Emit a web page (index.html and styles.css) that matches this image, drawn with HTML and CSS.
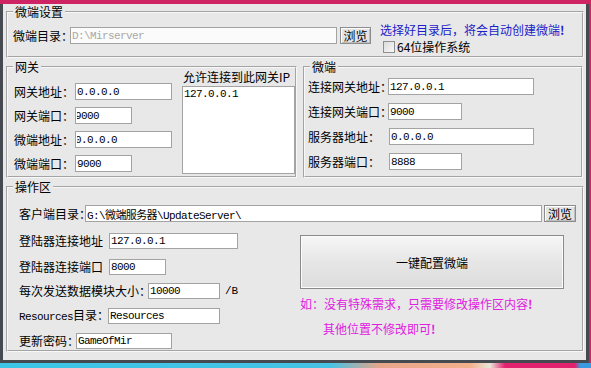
FILE: index.html
```html
<!DOCTYPE html>
<html lang="zh-CN">
<head>
    <meta charset="UTF-8">
    <title>微端配置</title>
    <link rel="stylesheet" href="styles.css">
</head>
<body>
    <div class="window">
        <fieldset class="group g-setup">
            <legend>微端设置</legend>
            <div class="row dir-row">
                <span class="lbl" style="width:57px">微端目录：</span>
                <input class="txt" style="width:267px" value="D:\Mirserver" disabled>
                <button class="btn-small">浏览</button>
            </div>
            <div class="hint-col">
                <div class="hint-blue">选择好目录后，将会自动创建微端<b>!</b></div>
                <label class="check-row"><input type="checkbox" class="chk">64位操作系统</label>
            </div>
        </fieldset>

        <div class="mid">
            <fieldset class="group g-gate">
                <legend>网关</legend>
                <div class="gate-body">
                    <div class="form-col gate-fields">
                        <div class="row"><span class="lbl" style="width:61px">网关地址：</span><input class="txt" style="width:97px" value="0.0.0.0"></div>
                        <div class="row"><span class="lbl" style="width:61px">网关端口：</span><input class="txt clip" style="width:57px" value="9000"></div>
                        <div class="row"><span class="lbl" style="width:61px">微端地址：</span><input class="txt clip" style="width:97px" value="0.0.0.0"></div>
                        <div class="row"><span class="lbl" style="width:61px">微端端口：</span><input class="txt" style="width:57px" value="9000"></div>
                    </div>
                    <div class="allow-col">
                        <div class="allow-title">允许连接到此网关IP</div>
                        <div class="listbox">127.0.0.1</div>
                    </div>
                </div>
            </fieldset>

            <fieldset class="group g-client">
                <legend>微端</legend>
                <div class="form-col client-fields">
                    <div class="row"><span class="lbl" style="width:80px">连接网关地址：</span><input class="txt" style="width:146px" value="127.0.0.1"></div>
                    <div class="row"><span class="lbl" style="width:80px">连接网关端口：</span><input class="txt" style="width:74px" value="9000"></div>
                    <div class="row"><span class="lbl" style="width:81px">服务器地址：</span><input class="txt" style="width:145px" value="0.0.0.0"></div>
                    <div class="row"><span class="lbl" style="width:81px">服务器端口：</span><input class="txt" style="width:73px" value="8888"></div>
                </div>
            </fieldset>
        </div>

        <fieldset class="group g-ops">
            <legend>操作区</legend>
            <div class="row path-row">
                <span class="lbl" style="width:66px">客户端目录：</span>
                <input class="txt" style="width:457px" value="G:\微端服务器\UpdateServer\">
                <button class="btn-small">浏览</button>
            </div>
            <div class="ops-body">
                <div class="form-col ops-fields">
                    <div class="row first"><span class="lbl" style="width:90px">登陆器连接地址</span><input class="txt short" style="width:129px" value="127.0.0.1"></div>
                    <div class="row"><span class="lbl" style="width:90px">登陆器连接端口</span><input class="txt short" style="width:57px" value="8000"></div>
                    <div class="row"><span class="lbl" style="width:129px">每次发送数据模块大小：</span><input class="txt short" style="width:72px" value="10000"><span class="unit">/B</span></div>
                    <div class="row"><span class="lbl" style="width:89px"><span class="mono">Resources</span>目录：</span><input class="txt short" style="width:112px" value="Resources"></div>
                    <div class="row"><span class="lbl" style="width:57px">更新密码：</span><input class="txt short" style="width:96px" value="GameOfMir"></div>
                </div>
                <div class="action-col">
                    <button class="btn-big">一键配置微端</button>
                    <div class="hint-pink">如：没有特殊需求，只需要修改操作区内容<b>!</b></div>
                    <div class="hint-pink second">其他位置不修改即可<b>!</b></div>
                </div>
            </div>
        </fieldset>
    </div>
    <div class="desk"></div>
</body>
</html>
```

FILE: styles.css
```css
body {
    margin: 0;
    background: #cf2463;
    font-family: "Noto Sans CJK SC", "Liberation Sans", sans-serif;
    font-size: 12px;
    line-height: 16px;
    color: #000;
}
.window {
    box-sizing: border-box;
    width: 589px;
    height: 359px;
    background: #e8e8e8;
    border: 3px solid #454950;
    border-top: none;
    padding: 0 2px 0 3px;
}
.desk {
    height: 9px;
    background: linear-gradient(to right, #3cc6e6 0, #45c2e4 330px, #e9a58a 380px, #f2b08c 470px, #e8e6d8 490px, #e2226e 505px, #e2226e 575px, #3a9be0 580px);
}
.group {
    margin: 0;
    padding: 0;
    min-width: 0;
    box-sizing: border-box;
    border: 2px groove #f8f8f8;
}
.group legend {
    margin-left: 5px;
    padding: 0 2px;
    line-height: 16px;
}
.row {
    display: flex;
    align-items: center;
}
.lbl {
    flex: none;
    white-space: nowrap;
}
.txt {
    box-sizing: border-box;
    height: 17px;
    margin: 0;
    padding: 0 1px;
    border: 1px solid #a3a3a3;
    background: #fff;
    font-family: "Liberation Mono", "Noto Sans CJK SC", monospace;
    font-size: 11px;
    letter-spacing: -0.6px;
    color: #000;
    outline: none;
}
.txt:disabled {
    color: #a8a8a8;
    background: #fbfbfb;
}
.txt.short {
    height: 16px;
}
.clip {
    text-indent: -2px;
}
.mono {
    font-family: "Liberation Mono", monospace;
    font-size: 11px;
    letter-spacing: -0.6px;
}
.btn-small {
    box-sizing: border-box;
    height: 17px;
    width: 31px;
    margin: 0 0 0 3px;
    padding: 0;
    border: 1px solid #8c8c8c;
    background: #e4e4e4;
    box-shadow: inset 1px 1px 0 #fff, inset -1px -1px 0 #bdbdbd;
    font-family: inherit;
    font-size: 12px;
    line-height: 14px;
}

/* 微端设置 */
.g-setup {
    display: flex;
    align-items: flex-start;
    margin-top: 4px;
    height: 54px;
}
.dir-row {
    margin: 7px 0 0 5px;
}
.hint-col {
    margin: 2px 0 0 9px;
}
.hint-blue {
    color: #1c1cc8;
}
.check-row {
    display: flex;
    align-items: center;
    margin-left: 3px;
    margin-top: 1px;
}
.chk {
    appearance: none;
    box-sizing: border-box;
    width: 12px;
    height: 12px;
    margin: 0 2px 0 0;
    border: 1px solid #8e8f8f;
    background: linear-gradient(135deg, #dcdcdc, #f8f8f8);
}

/* 网关 / 微端 */
.mid {
    display: flex;
    gap: 6px;
    margin-top: 1px;
}
.g-gate {
    width: 291px;
    height: 119px;
}
.g-client {
    width: 280px;
    height: 119px;
}
.gate-body {
    display: flex;
}
.form-col {
    display: flex;
    flex-direction: column;
}
.gate-fields {
    width: 168px;
    gap: 7px;
    margin: 8px 0 0 6px;
}
.allow-col {
    margin-top: -6px;
}
.allow-title {
    margin-left: 1px;
}
.listbox {
    box-sizing: border-box;
    width: 113px;
    height: 88px;
    margin-top: 1px;
    padding: 0 1px;
    border: 1px solid #a3a3a3;
    background: #fff;
    font-family: "Liberation Mono", monospace;
    font-size: 11px;
    letter-spacing: -0.6px;
    line-height: 14px;
}
.client-fields {
    gap: 8px;
    margin: 3px 0 0 3px;
}

/* 操作区 */
.g-ops {
    margin-top: 1px;
    height: 173px;
}
.path-row {
    margin: 10px 0 0 11px;
}
.path-row .btn-small {
    width: 32px;
    margin-left: 2px;
}
.ops-body {
    display: flex;
}
.ops-fields {
    width: 281px;
    gap: 8px;
    margin: 11px 0 0 11px;
}
.ops-fields .first {
    margin-bottom: 2px;
}
.unit {
    margin-left: 5px;
    font-family: "Liberation Mono", monospace;
    font-size: 11px;
}
.action-col {
    margin-top: 13px;
}
.btn-big {
    box-sizing: border-box;
    display: block;
    width: 264px;
    height: 54px;
    margin: 0;
    border: 1px solid #8a8a8a;
    background: linear-gradient(#f6f6f6, #e6e6e6 50%, #dcdcdc);
    box-shadow: inset 0 0 0 1px #fbfbfb;
    font-family: inherit;
    font-size: 12px;
    padding-top: 2px;
}
.hint-pink {
    color: #e020e0;
    margin-top: 7px;
}
.hint-pink.second {
    margin: 9px 0 0 23px;
}
```
